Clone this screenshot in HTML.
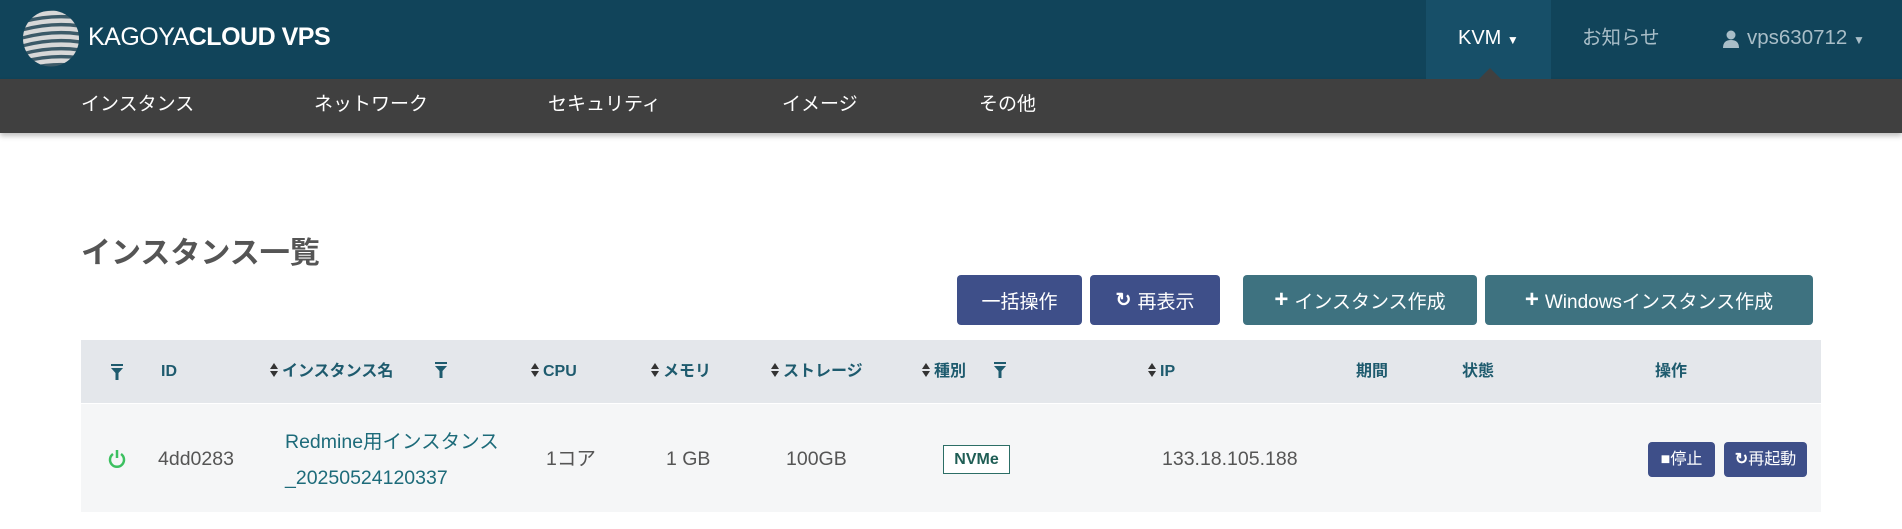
<!DOCTYPE html>
<html><head><meta charset="utf-8"><style>
*{margin:0;padding:0;box-sizing:border-box}
body{width:1902px;height:529px;background:#fff;font-family:"Liberation Sans","Noto Sans CJK JP",sans-serif;position:relative;overflow:hidden;color:#555}
.a{position:absolute;white-space:nowrap;line-height:26px}
#hd{position:absolute;left:0;top:0;width:1902px;height:79px;background:#11445a}
#nav{position:absolute;left:0;top:79px;width:1902px;height:54px;background:#404040;box-shadow:0 3px 5px rgba(0,0,0,.25)}
.nv{color:#fff;font-size:19px;top:92px}
.btn{position:absolute;top:275px;height:50px;border-radius:4px;color:#fff;font-size:19px;display:flex;align-items:center;justify-content:center;gap:6px}
.nb{background:#3e4f89}.tb{background:#3e7280}
.th{color:#1e5b6e;font-weight:bold;font-size:16px;top:359px}
.td{font-size:19.5px;top:446px;color:#555}
.sort{display:inline-block;width:8px;margin-right:4px;vertical-align:-1px}
</style></head><body>
<div id="hd"></div>
<div id="nav"></div>
<svg class="a" style="left:22px;top:10px" width="58" height="57" viewBox="0 0 58 57">
<defs><clipPath id="c"><ellipse cx="29" cy="28.5" rx="28" ry="28"/></clipPath></defs>
<ellipse cx="29" cy="28.5" rx="28" ry="28" fill="#3c5a68"/>
<g clip-path="url(#c)" stroke="#d8d8d8" stroke-width="4.5" fill="none">
<path d="M0 8 Q30 0 58 4"/><path d="M0 16 Q30 8 58 12"/><path d="M0 24 Q30 16 58 20"/><path d="M0 32 Q30 24 58 28"/><path d="M0 40 Q30 32 58 36"/><path d="M0 48 Q30 40 58 44"/><path d="M0 56 Q30 48 58 52"/>
</g></svg>
<div class="a" style="left:88px;top:24px;font-size:25px;color:#fff;letter-spacing:-0.5px">KAGOYA<b>CLOUD</b> <b>VPS</b></div>
<div class="a" style="left:1426px;top:0;width:125px;height:79px;background:#174f68"></div>
<div class="a" style="left:1479px;top:68px;width:0;height:0;border-left:11px solid transparent;border-right:11px solid transparent;border-bottom:11px solid #404040"></div>
<div class="a" style="left:1458px;top:25px;color:#fff;font-size:20px">KVM <span style="font-size:12px">▼</span></div>
<div class="a" style="left:1582px;top:25px;color:#a9bec8;font-size:19.5px">お知らせ</div>
<svg class="a" style="left:1723px;top:30px" width="16" height="18" viewBox="0 0 16 18"><circle cx="8" cy="5" r="4.5" fill="#a9bec8"/><path d="M0 18 Q0 10 8 10 Q16 10 16 18Z" fill="#a9bec8"/></svg>
<div class="a" style="left:1747px;top:25px;color:#a9bec8;font-size:20.5px">vps630712 <span style="font-size:12px">▼</span></div>
<div class="a nv" style="left:81px">インスタンス</div>
<div class="a nv" style="left:314px">ネットワーク</div>
<div class="a nv" style="left:548px">セキュリティ</div>
<div class="a nv" style="left:782px">イメージ</div>
<div class="a nv" style="left:979px">その他</div>
<div class="a" style="left:81px;top:237px;font-size:30px;line-height:34px;font-weight:bold;color:#555">インスタンス一覧</div>
<div class="btn nb" style="left:957px;width:125px">一括操作</div>
<div class="btn nb" style="left:1090px;width:130px"><b>↻</b>再表示</div>
<div class="btn tb" style="left:1243px;width:234px"><b style="font-size:24px">+</b>インスタンス作成</div>
<div class="btn tb" style="left:1485px;width:328px"><b style="font-size:24px">+</b>Windowsインスタンス作成</div>
<div class="a" style="left:81px;top:340px;width:1740px;height:63px;background:#e4e7eb"></div>
<div class="a" style="left:81px;top:404px;width:1740px;height:108px;background:#f5f6f7"></div>
<svg class="a" style="left:111px;top:364px" width="12" height="16" viewBox="0 0 12 16"><path d="M0 0H12V2H0Z M0 4H12L7.5 9V16H4.5V9Z" fill="#1e5b6e"/></svg>
<div class="a th" style="left:161px">ID</div>
<div class="a th" style="left:270px"><svg class="sort" width="8" height="14" viewBox="0 0 8 14"><path d="M4 0L8 6H0ZM4 14L0 8H8Z" fill="#333"/></svg>インスタンス名</div>
<svg class="a" style="left:435px;top:362px" width="12" height="16" viewBox="0 0 12 16"><path d="M0 0H12V2H0Z M0 4H12L7.5 9V16H4.5V9Z" fill="#1e5b6e"/></svg>
<div class="a th" style="left:531px"><svg class="sort" width="8" height="14" viewBox="0 0 8 14"><path d="M4 0L8 6H0ZM4 14L0 8H8Z" fill="#333"/></svg>CPU</div>
<div class="a th" style="left:651px"><svg class="sort" width="8" height="14" viewBox="0 0 8 14"><path d="M4 0L8 6H0ZM4 14L0 8H8Z" fill="#333"/></svg>メモリ</div>
<div class="a th" style="left:771px"><svg class="sort" width="8" height="14" viewBox="0 0 8 14"><path d="M4 0L8 6H0ZM4 14L0 8H8Z" fill="#333"/></svg>ストレージ</div>
<div class="a th" style="left:922px"><svg class="sort" width="8" height="14" viewBox="0 0 8 14"><path d="M4 0L8 6H0ZM4 14L0 8H8Z" fill="#333"/></svg>種別</div>
<svg class="a" style="left:994px;top:362px" width="12" height="16" viewBox="0 0 12 16"><path d="M0 0H12V2H0Z M0 4H12L7.5 9V16H4.5V9Z" fill="#1e5b6e"/></svg>
<div class="a th" style="left:1148px"><svg class="sort" width="8" height="14" viewBox="0 0 8 14"><path d="M4 0L8 6H0ZM4 14L0 8H8Z" fill="#333"/></svg>IP</div>
<div class="a th" style="left:1356px">期間</div>
<div class="a th" style="left:1462px">状態</div>
<div class="a th" style="left:1655px">操作</div>
<svg class="a" style="left:108px;top:449px" width="18" height="20" viewBox="0 0 18 20"><path d="M5 5 A7 7 0 1 0 13 5" stroke="#3cc060" stroke-width="2.5" fill="none"/><path d="M9 1 V9" stroke="#3cc060" stroke-width="2.5"/></svg>
<div class="a td" style="left:158px">4dd0283</div>
<div class="a td" style="left:285px;top:424px;color:#1d6b7a;line-height:36px">Redmine用インスタンス<br>_20250524120337</div>
<div class="a td" style="left:546px">1コア</div>
<div class="a td" style="left:666px">1 GB</div>
<div class="a td" style="left:786px">100GB</div>
<div class="a" style="left:943px;top:445px;width:67px;height:29px;border:1px solid #2c6e66;color:#1f5e55;font-weight:bold;font-size:16px;text-align:center;line-height:27px;background:#fff">NVMe</div>
<div class="a td" style="left:1162px">133.18.105.188</div>
<div class="a" style="left:1648px;top:442px;width:67px;height:35px;background:#3e4f89;border-radius:4px;color:#fff;font-size:16px;text-align:center;line-height:35px">■停止</div>
<div class="a" style="left:1724px;top:442px;width:83px;height:35px;background:#3e4f89;border-radius:4px;color:#fff;font-size:16px;text-align:center;line-height:35px"><b>↻</b>再起動</div>
</body></html>
